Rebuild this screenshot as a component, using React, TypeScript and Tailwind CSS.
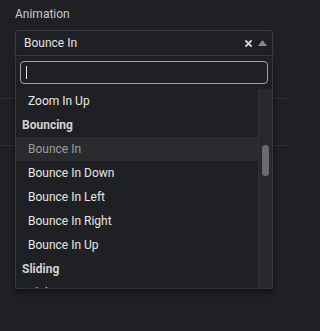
const groups = [
  { type: "option", label: "Zoom In Up" },
  { type: "group", label: "Bouncing" },
  { type: "option", label: "Bounce In", selected: true },
  { type: "option", label: "Bounce In Down" },
  { type: "option", label: "Bounce In Left" },
  { type: "option", label: "Bounce In Right" },
  { type: "option", label: "Bounce In Up" },
  { type: "group", label: "Sliding" },
  { type: "option", label: "Slide In Down" },
];

const App = () => {
  return (
    <div className="min-h-screen bg-[#1f2023] font-['Roboto',sans-serif] overflow-hidden">
      <div className="w-[288px]">
        <div className="px-[15px] pt-[6px]">
          <div className="text-[12px] leading-[16px] text-[#c9c9c9]">Animation</div>
          <div className="relative mt-[8px] z-10">
            <div className="h-[26px] border border-[#3a3b3f] rounded-t-[3px] flex items-center pl-[8px] pr-[5px]">
              <span className="flex-1 text-[12px] text-[#e3e3e3]">Bounce In</span>
              <svg width="7" height="7" viewBox="0 0 7 7" className="mr-[6px]">
                <path d="M1 1 L6 6 M6 1 L1 6" stroke="#d4d4d4" strokeWidth="1.8" strokeLinecap="round" />
              </svg>
              <svg width="9" height="6" viewBox="0 0 9 6">
                <path d="M0 6 L4.5 0 L9 6 Z" fill="#8a8a8a" />
              </svg>
            </div>
            <div className="absolute top-full left-0 right-0 bg-[#1f2023] border-x border-b border-[#36373b] rounded-b-[3px] shadow-[0_3px_6px_rgba(0,0,0,0.5)]">
              <div className="px-[4px] pt-[5px] pb-[5px]">
                <div className="h-[23px] border border-[#a3a3a6] rounded-[4px] flex items-center pl-[5px]">
                  <div className="w-px h-[13px] bg-[#e6e6e6]" />
                </div>
              </div>
              <div className="flex h-[199px] overflow-hidden">
                <div className="flex-1">
                  {groups.map((item) =>
                    item.type === "group" ? (
                      <div
                        key={item.label}
                        className="h-[24px] flex items-center pl-[6px] text-[12px] font-bold text-[#d2d2d2]"
                      >
                        {item.label}
                      </div>
                    ) : (
                      <div
                        key={item.label}
                        className={
                          item.selected
                            ? "h-[24px] flex items-center pl-[12px] text-[12px] text-[#9c9c9e] bg-[#2a2b2f]"
                            : "h-[24px] flex items-center pl-[12px] text-[12px] text-[#e6e6e6]"
                        }
                      >
                        {item.label}
                      </div>
                    )
                  )}
                </div>
                <div className="w-[14px] bg-[#29292b] border-l border-[#313134] flex justify-center">
                  <div className="w-[7px] h-[31px] mt-[56px] rounded-full bg-[#6b6b6d]" />
                </div>
              </div>
            </div>
          </div>
        </div>
        <div className="h-px bg-[#2e2f32] mt-[42px]" />
        <div className="h-px bg-[#2e2f32] mt-[46px]" />
      </div>
    </div>
  );
};

export default App;
